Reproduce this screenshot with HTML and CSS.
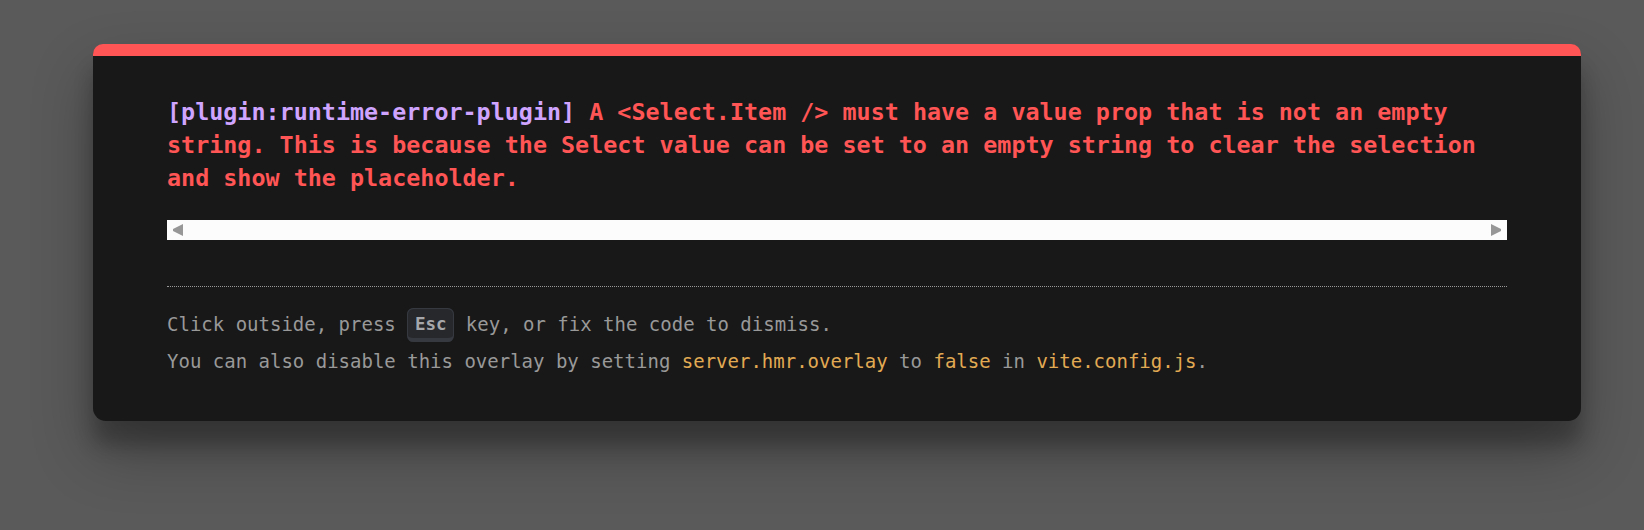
FILE: index.html
```html
<!DOCTYPE html>
<html lang="en">
<head>
<meta charset="utf-8">
<title>Vite error overlay</title>
<link rel="stylesheet" href="styles.css">
</head>
<body>
<div class="backdrop">
  <div class="window">
    <pre class="message"><span class="plugin">[plugin:runtime-error-plugin]</span><span class="message-body"> A &lt;Select.Item /&gt; must have a value prop that is not an empty string. This is because the Select value can be set to an empty string to clear the selection and show the placeholder.</span></pre>
    <div class="hscroll">
      <svg class="arrow" width="10" height="12" viewBox="0 0 10 12"><polygon points="0,5 10,0 10,12 0,7" fill="#979797"/></svg>
      <svg class="arrow" width="10" height="12" viewBox="0 0 10 12"><polygon points="10,5 0,0 0,12 10,7" fill="#979797"/></svg>
    </div>
    <div class="tip">Click outside, press <kbd>Esc</kbd> key, or fix the code to dismiss.<br>You can also disable this overlay by setting <code>server.hmr.overlay</code> to <code>false</code> in <code>vite.config.js</code>.</div>
  </div>
</div>
</body>
</html>
```

FILE: styles.css
```css
html, body {
  margin: 0;
  padding: 0;
}

body {
  background: #5a5a5a;
  width: 1644px;
  height: 530px;
  overflow: hidden;
}

.backdrop {
  padding-top: 44px;
  padding-left: 93px;
}

.window {
  box-sizing: border-box;
  width: 1488px;
  font-family: "DejaVu Sans Mono", "Liberation Mono", monospace;
  color: #d8d8d8;
  background: #181818;
  border-top: 12px solid #ff5555;
  border-radius: 10px 10px 13px 13px;
  padding: 39.6px 74px 40.3px 74px;
  box-shadow: 0 30px 61px rgba(0, 0, 0, 0.30), 0 24px 19px rgba(0, 0, 0, 0.22);
  overflow: hidden;
}

.message {
  font-family: "DejaVu Sans Mono", "Liberation Mono", monospace;
  font-size: 23.39px;
  line-height: 33.28px;
  font-weight: 700;
  white-space: pre-wrap;
  margin: 0 0 24.6px 0;
}

.plugin {
  color: #cfa4ff;
}

.message-body {
  color: #ff5555;
}

.hscroll {
  height: 20px;
  background: #fcfcfc;
  display: flex;
  align-items: center;
  justify-content: space-between;
  padding: 0 6px;
  margin-bottom: 46px;
}

.arrow {
  display: block;
}

.tip {
  font-size: 19px;
  line-height: 37.44px;
  color: #999999;
  border-top: 1px dotted #999999;
  padding-top: 18.5px;
}

.tip code {
  font-family: "DejaVu Sans Mono", "Liberation Mono", monospace;
  font-size: 19px;
  color: #e2aa53;
}

.tip kbd {
  font-family: "DejaVu Sans Mono", "Liberation Mono", monospace;
  font-size: 17.54px;
  line-height: 1.5;
  font-weight: 700;
  background-color: #26282c;
  color: #a6a7ab;
  padding: 5.4px 6.76px 3.46px;
  border-radius: 6.4px;
  border-style: solid;
  border-color: #363940;
  border-width: 1.6px 1.6px 4.8px;
}
```
